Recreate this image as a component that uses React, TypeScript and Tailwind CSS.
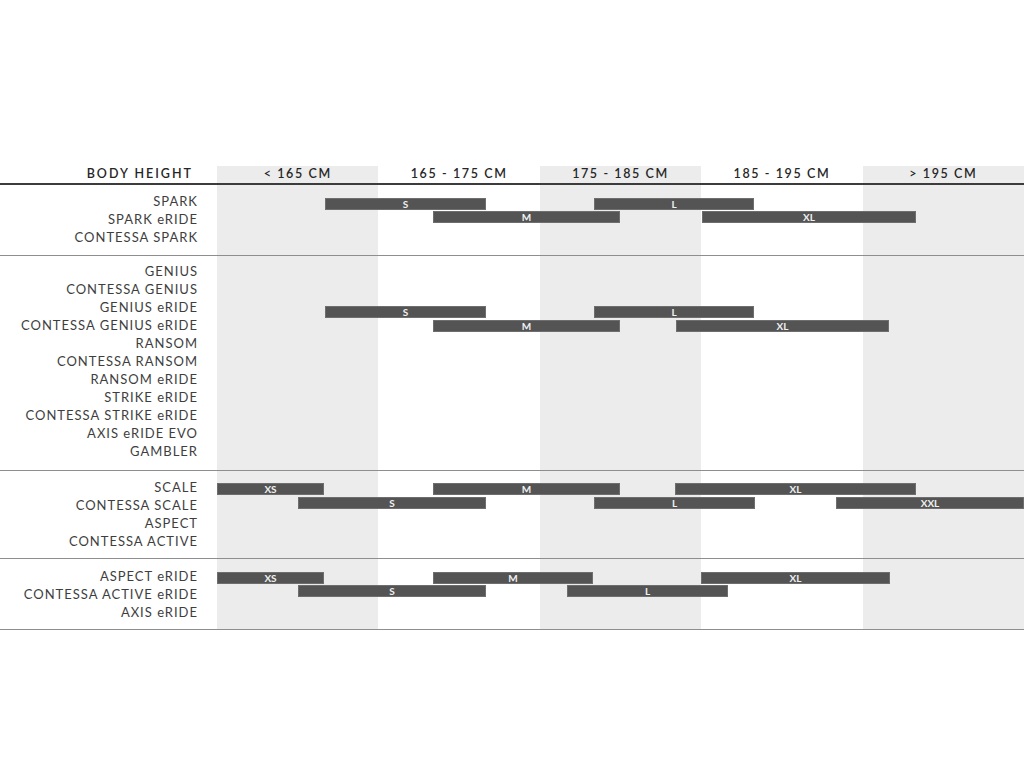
import React from "react";

type Bar = { label: string; x1: number; x2: number; row: 0 | 1 };
type Section = {
  models: string[];
  height: number;
  padTop: number;
  barTop: number;
  barGap: number;
  bars: Bar[];
};

const CHART_LEFT = 217;

const sections: Section[] = [
  {
    models: ["SPARK", "SPARK eRIDE", "CONTESSA SPARK"],
    height: 70,
    padTop: 7,
    barTop: 13,
    barGap: 13,
    bars: [
      { label: "S", x1: 325, x2: 486, row: 0 },
      { label: "L", x1: 594, x2: 754, row: 0 },
      { label: "M", x1: 433, x2: 620, row: 1 },
      { label: "XL", x1: 702, x2: 916, row: 1 },
    ],
  },
  {
    models: [
      "GENIUS",
      "CONTESSA GENIUS",
      "GENIUS eRIDE",
      "CONTESSA GENIUS eRIDE",
      "RANSOM",
      "CONTESSA RANSOM",
      "RANSOM eRIDE",
      "STRIKE eRIDE",
      "CONTESSA STRIKE eRIDE",
      "AXIS eRIDE EVO",
      "GAMBLER",
    ],
    height: 214,
    padTop: 6,
    barTop: 50,
    barGap: 14,
    bars: [
      { label: "S", x1: 325, x2: 486, row: 0 },
      { label: "L", x1: 594, x2: 754, row: 0 },
      { label: "M", x1: 433, x2: 620, row: 1 },
      { label: "XL", x1: 676, x2: 889, row: 1 },
    ],
  },
  {
    models: ["SCALE", "CONTESSA SCALE", "ASPECT", "CONTESSA ACTIVE"],
    height: 87,
    padTop: 7,
    barTop: 12,
    barGap: 14,
    bars: [
      { label: "XS", x1: 217, x2: 324, row: 0 },
      { label: "M", x1: 433, x2: 620, row: 0 },
      { label: "XL", x1: 675, x2: 916, row: 0 },
      { label: "S", x1: 298, x2: 486, row: 1 },
      { label: "L", x1: 594, x2: 755, row: 1 },
      { label: "XXL", x1: 836, x2: 1024, row: 1 },
    ],
  },
  {
    models: ["ASPECT eRIDE", "CONTESSA ACTIVE eRIDE", "AXIS eRIDE"],
    height: 70,
    padTop: 8,
    barTop: 13,
    barGap: 13,
    bars: [
      { label: "XS", x1: 217, x2: 324, row: 0 },
      { label: "M", x1: 433, x2: 593, row: 0 },
      { label: "XL", x1: 701, x2: 890, row: 0 },
      { label: "S", x1: 298, x2: 486, row: 1 },
      { label: "L", x1: 567, x2: 728, row: 1 },
    ],
  },
];

const headers = ["< 165 CM", "165 - 175 CM", "175 - 185 CM", "185 - 195 CM", "> 195 CM"];

function Bands() {
  return (
    <>
      <div className="bg-[#ececec]" />
      <div className="bg-white" />
      <div className="bg-[#ececec]" />
      <div className="bg-white" />
      <div className="bg-[#ececec]" />
    </>
  );
}

export default function App() {
  return (
    <div
      className="w-[1024px] h-[768px] bg-white pt-[166px] text-[#3a3a3a]"
      style={{ fontFamily: "Lato, 'Noto Sans', sans-serif" }}
    >
      {/* header */}
      <div className="grid grid-cols-[217px_repeat(5,minmax(0,1fr))] h-[19px] border-b-2 border-[#3c3c3c]">
        <div className="flex items-center justify-end pr-[24px] text-[12.5px] font-semibold tracking-[2px] text-[#262626] leading-none">
          BODY HEIGHT
        </div>
        {headers.map((h, i) => (
          <div
            key={h}
            className={`flex items-center justify-center text-[12.5px] font-semibold tracking-[1.6px] text-[#262626] leading-none ${
              i % 2 === 0 ? "bg-[#ececec]" : "bg-white"
            }`}
          >
            {h}
          </div>
        ))}
      </div>

      {sections.map((s, si) => (
        <div
          key={si}
          className="relative grid grid-cols-[217px_repeat(5,minmax(0,1fr))] border-b border-[#8e8e8e]"
          style={{ height: s.height + 1 }}
        >
          <div
            className="flex flex-col items-end pr-[19px] text-[13px] tracking-[1px] leading-[18px] text-[#3e3e3e]"
            style={{ paddingTop: s.padTop }}
          >
            {s.models.map((m) => (
              <div key={m} className="whitespace-nowrap">
                {m}
              </div>
            ))}
          </div>
          <Bands />
          <div className="absolute top-0 bottom-0 right-0 left-[217px]">
            {s.bars.map((b, bi) => (
              <div
                key={bi}
                className="absolute h-[12px] bg-[#545454] border border-[#6e6e6e] flex items-center justify-center text-[10px] font-bold text-[#f0f0f0] leading-none"
                style={{
                  left: b.x1 - CHART_LEFT,
                  width: b.x2 - b.x1,
                  top: s.barTop + b.row * s.barGap,
                }}
              >
                {b.label}
              </div>
            ))}
          </div>
        </div>
      ))}
    </div>
  );
}
